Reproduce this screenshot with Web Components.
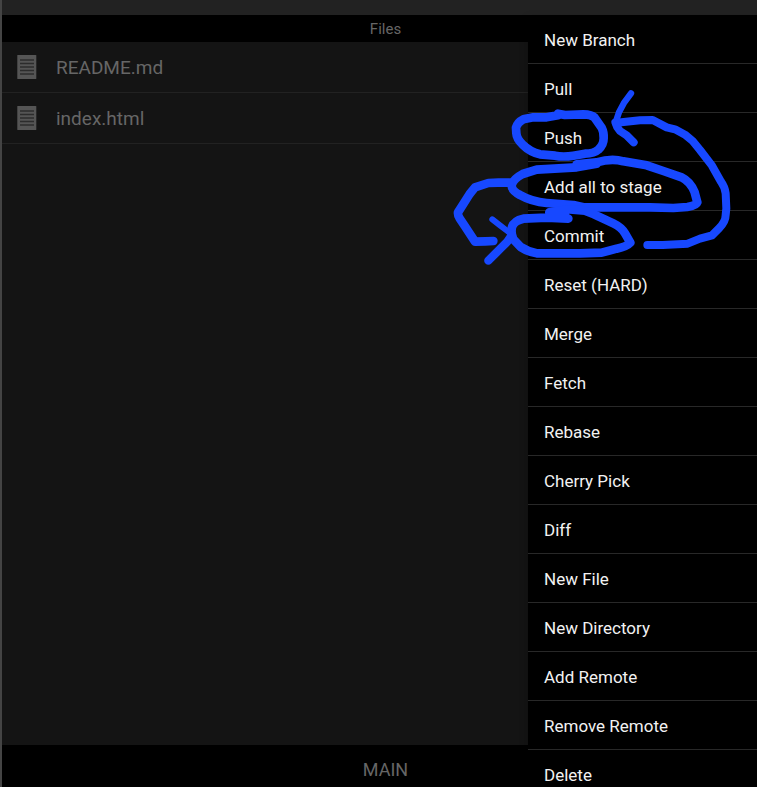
<!DOCTYPE html>
<html lang="en">
<head>
<meta charset="utf-8">
<meta name="viewport" content="width=device-width, initial-scale=1">
<title>Files</title>
<style>
html, body { margin: 0; height: 100%; background: #000; }
body { font-family: Roboto, "Noto Sans", sans-serif; overflow: hidden; }
</style>
</head>
<body>
<repo-app></repo-app>
<script>
const define = (name, html) => customElements.define(name, class extends HTMLElement {
  constructor() {
    super();
    const t = document.createElement('template');
    t.innerHTML = html;
    this.attachShadow({ mode: 'open' }).append(t.content.cloneNode(true));
  }
});

define('file-row', `
<style>
:host { display: flex; align-items: center; gap: 19px; height: 50px; padding: 0 15px; border-bottom: 1px solid #222; color: #666; font-size: 19px; }
svg { width: 20px; height: 24px; flex: none; }
</style>
<svg viewBox="0 0 20 24" aria-hidden="true">
  <rect x=".3" width="19" height="24" rx=".6" fill="#555"/>
  <path d="M3 5H17M3 8.5H17M3 12H17M3 15.5H17M3 19H17" stroke="#2c2c2c" stroke-width="1.5"/>
</svg>
<span><slot></slot></span>`);

define('title-bar', `
<style>
:host { display: flex; align-items: center; justify-content: center; height: 27px; padding-left: 12px; background: #000; color: #666; font-size: 15px; }
h1 { margin: 0; font: inherit; }
</style>
<h1><slot></slot></h1>`);

define('branch-bar', `
<style>
:host { display: flex; align-items: center; justify-content: center; height: 42px; padding: 6px 0 0 12px; box-sizing: border-box; background: #000; color: #666; font-size: 18px; }
</style>
<slot></slot>`);

define('menu-item', `
<style>
:host { display: block; border-bottom: 1px solid #282828; }
button { display: block; width: 100%; height: 48px; padding: 2px 16px 0; border: 0; background: none; color: #f2f2f2; font: 17px/24px Roboto, "Noto Sans", sans-serif; text-align: left; cursor: pointer; }
button:hover { background: #1b1b1b; }
</style>
<button type="button"><slot></slot></button>`);

define('action-menu', `
<style>
:host { display: block; width: 229px; background: #000; box-shadow: 0 4px 8px #0004; overflow: hidden; }
</style>
<nav aria-label="Repository actions"><slot></slot></nav>`);

define('ink-notes', `
<style>
:host { display: block; pointer-events: none; }
svg { display: block; width: 300px; height: 185px; overflow: visible; }
</style>
<svg viewBox="0 0 900 555" fill="none" stroke="#1748ff" stroke-width="26" stroke-linecap="round" stroke-linejoin="round" aria-hidden="true">
  <path d="M324 86L345 90L400 88Q424 88 434 98L455 128Q462 142 461 160Q461 180 445 194Q432 206 405 206L370 212Q340 217 315 212L270 208Q240 201 218 179Q200 162 199 145L198 128Q202 112 220 103L250 97H290L324 91"/>
  <path d="M380 238L440 232Q485 219 520 229L590 241L640 258L695 277Q722 290 734 322L742 352Q739 362 712 366L670 369L600 367H400L370 360L290 354Q245 350 210 330Q184 317 185 300Q190 282 218 267L260 254L380 247L440 236"/>
  <path d="M298 382L360 373L405 377L432 388L490 415Q515 427 525 445L541 473Q530 485 500 491L455 503L390 505H260Q235 501 212 486L190 463Q182 445 186 426Q192 407 220 401L290 398L355 401M298 388L345 388"/>
  <path d="M178 293H145L115 294L75 307L59 327L24 382Q23 391 29 400L45 424L75 470L106 469L130 468"/>
  <path d="M127 403L150 421L172 438L187 450" stroke-width="18"/>
  <path d="M186 450L172 470L151 491L115 527" stroke-width="25"/>
  <path d="M592 480H638L713 476L750 461L786 451L807 430Q827 410 827 390L829 370L827 325Q824 305 813 290L786 242L750 195L728 168L705 149L675 133L650 127L608 105L570 106L500 113" stroke-width="24"/>
  <path d="M543 25L523 52L507 82L496 115" stroke-width="19"/>
  <path d="M496 112Q500 128 510 138L530 151L551 172" stroke-width="24"/>
</svg>`);

define('repo-app', `
<style>
:host { display: flex; flex-direction: column; position: relative; height: 100vh; box-sizing: border-box; border-left: 2px solid #444; overflow: hidden; background: #141414; }
header { height: 15px; background: #222; flex: none; }
main { flex: 1; }
action-menu { position: absolute; top: 15px; right: 0; bottom: 0; }
ink-notes { position: absolute; top: 85px; right: 7px; }
</style>
<header></header>
<title-bar>Files</title-bar>
<main>
  <file-row>README.md</file-row>
  <file-row>index.html</file-row>
</main>
<branch-bar>MAIN</branch-bar>
<action-menu>
  <menu-item>New Branch</menu-item>
  <menu-item>Pull</menu-item>
  <menu-item>Push</menu-item>
  <menu-item>Add all to stage</menu-item>
  <menu-item>Commit</menu-item>
  <menu-item>Reset (HARD)</menu-item>
  <menu-item>Merge</menu-item>
  <menu-item>Fetch</menu-item>
  <menu-item>Rebase</menu-item>
  <menu-item>Cherry Pick</menu-item>
  <menu-item>Diff</menu-item>
  <menu-item>New File</menu-item>
  <menu-item>New Directory</menu-item>
  <menu-item>Add Remote</menu-item>
  <menu-item>Remove Remote</menu-item>
  <menu-item>Delete</menu-item>
</action-menu>
<ink-notes></ink-notes>`);
</script>
</body>
</html>
